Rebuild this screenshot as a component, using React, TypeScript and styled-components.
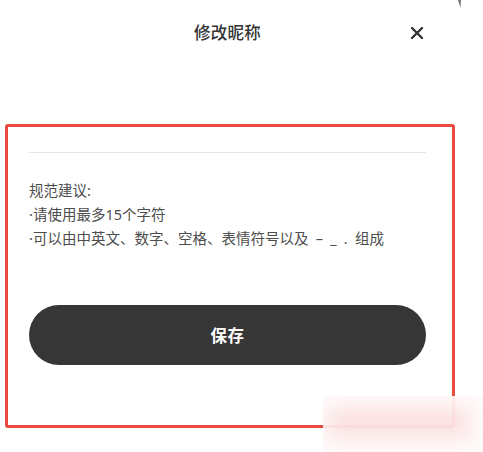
import React from "react";
import styled, { createGlobalStyle } from "styled-components";

const Global = createGlobalStyle`
  html, body { margin: 0; padding: 0; background: #ffffff; }
  body { font-family: "Noto Sans CJK SC", "Noto Sans", sans-serif; }
`;

const Page = styled.div`
  position: relative;
  width: 483px;
  height: 452px;
  overflow: hidden;
  background: #fff;
`;

const Column = styled.div`
  width: 455px;
  display: flex;
  flex-direction: column;
`;

const Header = styled.div`
  height: 65px;
  display: grid;
  grid-template-columns: 1fr auto 1fr;
  align-items: center;
`;

const Title = styled.div`
  grid-column: 2;
  font-size: 16.5px;
  font-weight: 500;
  color: #333;
  letter-spacing: 0.2px;
  line-height: 1;
  margin-top: -1px;
`;

const Close = styled.button`
  grid-column: 3;
  justify-self: end;
  margin-right: 31px;
  width: 14px;
  height: 14px;
  padding: 0;
  border: none;
  background: none;
  display: flex;
  align-items: center;
  justify-content: center;
`;

const Panel = styled.div`
  margin: 59px 0 0 5px;
  height: 304px;
  box-sizing: border-box;
  border: 3px solid #e84a3f;
  border-radius: 3px;
  padding: 25px 26px 0 21px;
  display: flex;
  flex-direction: column;
`;

const Divider = styled.div`
  height: 1px;
  background: #e4e4e4;
`;

const Tips = styled.div`
  margin-top: 25px;
  font-family: "Noto Sans", "Noto Sans CJK SC", sans-serif;
  font-size: 14.5px;
  line-height: 24px;
  color: #4d4d4d;
`;

const TipLine = styled.div`
  white-space: pre;
`;

const SaveButton = styled.button`
  margin-top: 55px;
  height: 60px;
  border: none;
  border-radius: 30px;
  background: #363636;
  color: #fff;
  font-family: "Noto Sans CJK SC", "Noto Sans", sans-serif;
  font-size: 16.5px;
  font-weight: 700;
  letter-spacing: 0.5px;
`;

const Blur = styled.div`
  position: absolute;
  left: 323px;
  top: 396px;
  width: 160px;
  height: 56px;
  overflow: hidden;
  background: rgba(255, 250, 250, 0.92);
  &::after {
    content: "";
    position: absolute;
    left: 6px;
    top: 12px;
    right: 14px;
    bottom: 14px;
    background: rgba(240, 175, 170, 0.32);
    filter: blur(9px);
  }
`;

const Mark = styled.svg`
  position: absolute;
  left: 455px;
  top: 0;
`;

export default function App() {
  return (
    <Page>
      <Global />
      <Column>
        <Header>
          <Title>修改昵称</Title>
          <Close aria-label="关闭">
            <svg width="12" height="12" viewBox="0 0 12 12">
              <path d="M1 1 L11 11 M11 1 L1 11" stroke="#333" strokeWidth="2.4" strokeLinecap="round" />
            </svg>
          </Close>
        </Header>
        <Panel>
          <Divider />
          <Tips>
            <TipLine>规范建议:</TipLine>
            <TipLine>·请使用最多15个字符</TipLine>
            <TipLine>{"·可以由中英文、数字、空格、表情符号以及\u2002–\u2002_\u2002.\u2002组成"}</TipLine>
          </Tips>
          <SaveButton>保存</SaveButton>
        </Panel>
      </Column>
      <Blur />
      <Mark width="10" height="10" viewBox="0 0 10 10">
        <path d="M3 0 L6 0 L5.5 8 Z" fill="#777" />
      </Mark>
    </Page>
  );
}
